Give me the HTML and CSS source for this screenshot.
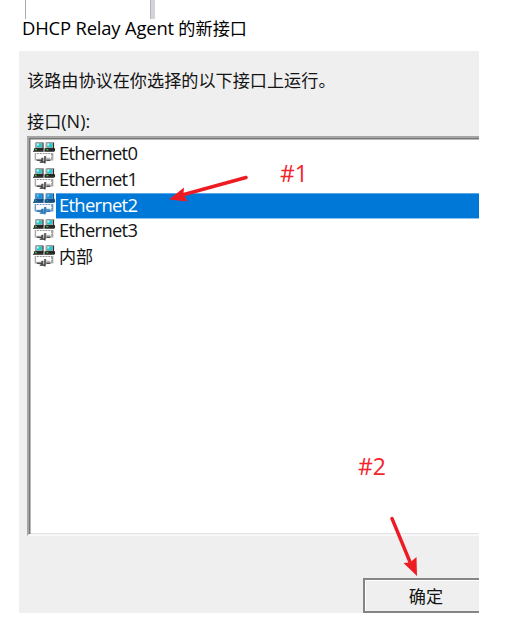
FILE: index.html
```html
<!DOCTYPE html>
<html lang="zh-CN">
<head>
<meta charset="utf-8">
<title>DHCP Relay Agent 的新接口</title>
<link rel="stylesheet" href="styles.css">
</head>
<body>
<svg class="symbols" aria-hidden="true">
  <symbol id="net" viewBox="0 0 24 24">
    <path class="shade" d="M3 0h8v7H3zM14 0h8v7h-8z"/>
    <path class="case" d="M2 0h8v6H2zM13 0h8v6h-8z"/>
    <path class="screen" d="M4 1h5v4H4zM15 1h5v4h-5z"/>
    <path class="glare" d="M4 1h2v2H4zM15 1h2v2h-2z"/>
    <path class="shade" d="M1 6h10v3H1zM12 6h11v3H12z"/>
    <path class="lamp" d="M2 7h2v1H2zM14 7h2v1h-2z"/>
    <path class="base" d="M0 8.500h11v1.500H0zM12 8.500h10v1.500H12z"/>
    <path class="wire" d="M2.500 11v7h4M20.500 11v7h-4"/>
    <path class="dash" d="M4 11.500h16M19.500 12v6"/>
    <path class="plug" d="M5 17h3l2-1h2v-2h2v2h4v3h-4v1H9v-1H5z"/>
    <path class="prong" d="M4 18.500h5M9.500 16v5M12.500 14v8M14 18.500h4M7 20.500h5"/>
  </symbol>
</svg>
<main class="page">
  <div class="behind"></div>
  <h1 class="title"><span class="latin">DHCP Relay Agent</span> 的新接口</h1>
  <section class="dialog">
    <p class="intro">该路由协议在你选择的以下接口上运行。</p>
    <p class="label">接口<span class="key">(N):</span></p>
    <ul class="list">
      <li class="row"><svg class="icon"><use href="#net"/></svg><span class="name">Ethernet0</span></li>
      <li class="row"><svg class="icon"><use href="#net"/></svg><span class="name">Ethernet1</span></li>
      <li class="row selected"><svg class="icon"><use href="#net"/></svg><span class="name">Ethernet2</span></li>
      <li class="row"><svg class="icon"><use href="#net"/></svg><span class="name">Ethernet3</span></li>
      <li class="row"><svg class="icon"><use href="#net"/></svg><span class="name cjk">内部</span></li>
    </ul>
    <button class="ok">确定</button>
  </section>
  <svg class="arrows" viewBox="0 0 512 633">
    <path class="line" d="M246 177.500L184 194.500M392 518.500L410 562"/>
    <path class="head" d="M169 199.500L184 187.500L183.500 194L187.500 201.500ZM417 576L403.500 563L410 562.500L416.500 557Z"/>
  </svg>
  <span class="note first">#1</span>
  <span class="note second">#2</span>
</main>
</body>
</html>
```
FILE: styles.css
```css
* { box-sizing: border-box; }
body { margin: 0; background: #fff; color: #141414; font: 17.15px/24px "Open Sans", "Noto Sans CJK SC", sans-serif; }
h1, p, ul { margin: 0; padding: 0; font-weight: 400; font-size: inherit; }
.symbols { position: absolute; width: 0; height: 0; }
.page { position: relative; width: 512px; height: 633px; overflow: hidden; }
.behind { width: 130px; height: 19px; margin-left: 25px; border-left: 1px solid #a9a9af; border-right: 4px solid #d4d4d8; box-shadow: inset -1px 0 #b4b4ba; }
.title { height: 32px; padding-left: 22px; line-height: 18px; white-space: nowrap; color: #000; }
.latin { font-size: 18.4px; letter-spacing: -0.17px; }
.dialog { width: 460px; height: 562px; margin-left: 19px; padding: 18px 0 0 8px; background: #efefef; overflow: hidden; display: flex; flex-direction: column; }
.intro { height: 42px; white-space: nowrap; }
.label { height: 25px; }
.key { font-size: 18px; }
.list { flex: none; height: 400px; list-style: none; background: #fff; margin-top: 2px; border-top: 2px solid #a5a5a5; border-left: 2px solid #a5a5a5; border-bottom: 2px solid #f8f8f8; box-shadow: inset 1.5px 1.5px #777, inset 0 -1px #e2e2e2; padding: 4px 0 0 4px; }
.row {
  --shade: #242424; --case: #a3a7a7; --screen: #20c9cc; --glare: #b5ffff; --lamp: #36ef45;
  --base: #555; --wire: #aaa; --dash: #888; --plug: #b5b5b5; --prong: #292929;
  display: flex; height: 25.7px;
}
.selected {
  --shade: #164d80; --case: #4f92c8; --screen: #1592d8; --glare: #6cc0f0; --lamp: #1fa5b8;
  --base: #2c6798; --wire: #669ecb; --dash: #5b94c4; --plug: #5c9bd0; --prong: #1a65a5;
}
.icon { width: 23px; height: 24px; flex: none; }
.name { flex: 1; padding-left: 3px; line-height: 21px; font-size: 18.4px; letter-spacing: -0.7px; }
.cjk { font-size: 17.1px; line-height: 24px; letter-spacing: 0; }
.selected .name { background: #0078d7; color: #fff; border-top: 1px solid #5aa7e6; border-bottom: 1px solid #8fc4ef; line-height: 21px; }
.ok { flex: none; width: 126px; height: 35px; margin: 42px 0 0 336px; padding: 3px 0 0; border: 2px solid #858585; background: #efefef; box-shadow: inset 1px 1px #fff; font: inherit; color: #141414; }
.arrows { position: absolute; inset: 0; width: 512px; height: 633px; }
.line { fill: none; stroke: #ed1c24; stroke-width: 3.4; stroke-linecap: round; }
.head { fill: #ed1c24; }
.note { position: absolute; color: #f4252d; font: 23px/28px "Open Sans", sans-serif; }
.first { left: 280px; top: 159px; }
.second { left: 358px; top: 452px; }
.shade { fill: var(--shade); }
.case { fill: var(--case); }
.screen { fill: var(--screen); }
.glare { fill: var(--glare); }
.lamp { fill: var(--lamp); }
.base { fill: var(--base); }
.wire { fill: none; stroke: var(--wire); stroke-width: 1.5; }
.dash { fill: none; stroke: var(--dash); stroke-dasharray: 2 1; }
.plug { fill: var(--plug); }
.prong { fill: none; stroke: var(--prong); stroke-width: 1.2; }
```
